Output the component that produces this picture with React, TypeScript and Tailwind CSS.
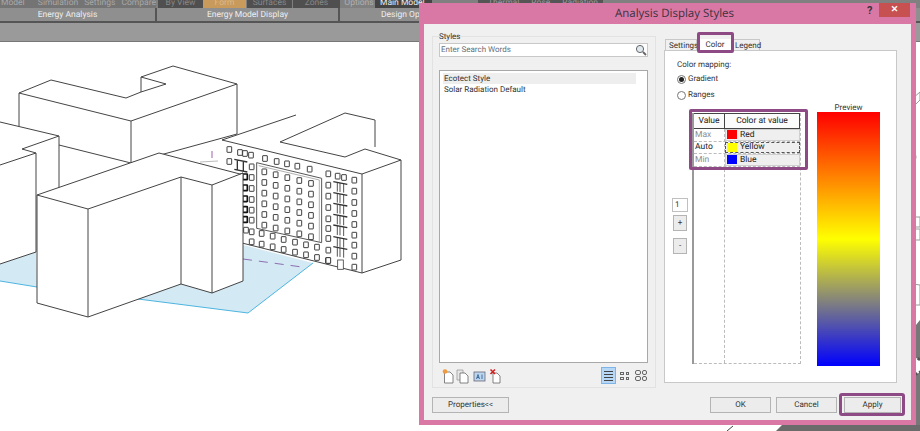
import type { ReactNode } from "react";

// window positions, taken from the facade at 3x
const topRow = [[88, 88], [120, 97], [135, 100], [153, 105], [195, 115], [230, 124], [261, 131], [292, 138], [329, 147], [385, 161], [413, 168], [432, 172], [463, 180], [88, 124], [155, 140]];
const lowRows = [[138, 330], [155, 335], [185, 340], [218, 348], [251, 358], [285, 366], [318, 374], [351, 381], [155, 365], [185, 372], [218, 380], [251, 388], [285, 396], [318, 404], [351, 412], [384, 421]];
const leftCol = [172, 205, 238, 270, 300];
const colA = [195, 228, 262, 296, 325, 355, 390, 421];
const colB = [213, 247, 280, 313, 345, 375, 408, 441];
const balconies = [185, 218, 250, 283, 315, 350, 380];
const panelX = [193, 227, 262, 298, 333];

function Win({ x, y, dark }: { x: number; y: number; dark?: boolean }) {
  return <rect x={x - 7} y={y - 8} width={14} height={17} rx={1} fill="#fff" stroke={dark ? "#111" : "#333"} strokeWidth={dark ? 5 : 2.8} />;
}

function Model() {
  const line = { stroke: "#444", strokeWidth: 1, strokeLinejoin: "round" as const, fill: "#fff" };
  return (
    <svg viewBox="0 42 920 389" className="block w-[920px] h-[389px]">
      <polygon points="0,264 36,252 37,287 0,281" fill="#d3e9f4" />
      <polyline points="0,281 37,287" stroke="#4db5e0" fill="none" />
      <polygon points="100,280 243,245 313,263 248,313 138,299" fill="#d3e9f4" />
      <polyline points="313,263 248,313 138,299" stroke="#4db5e0" fill="none" />
      <path d="M243 259 L302 267" stroke="#8d6fb0" strokeDasharray="9 7" fill="none" />

      {/* back block */}
      <polygon points="19,93 51,80 126,98 141,92 141,77 173,66 237,84 237,134 131,163 19,135" {...line} />
      <path d="M19 93 L131 121 L237 84 M131 121 V163 M141 92 L166 84 L141 77" {...line} fill="none" />
      <path d="M212 151 V158" stroke="#a060b0" fill="none" />
      <path d="M200 162 L218 161" stroke="#bbb" fill="none" />

      {/* right block */}
      <polygon points="222,140 296,115 345,113 375,120 375,147 365,149 401,160 401,260 362,273 222,238" fill="#fff" />
      <path d="M222 140 L296 115 M280 142 L345 113 L375 120 V147 M280 142 L345 157 L365 149 L401 160 V260 L362 273 L222 238 M222 140 L362 174 L401 160 M362 174 V273" {...line} fill="none" />
      <g transform="translate(200 120) scale(0.3333)">
        {topRow.map(([x, y]) => <Win key={`${x}-${y}`} x={x} y={y} />)}
        {lowRows.map(([x, y]) => <Win key={`${x}-${y}`} x={x} y={y} />)}
        {leftCol.map((y) => <Win key={`a${y}`} x={155} y={y} />)}
        {leftCol.map((y) => <Win key={`b${y}`} x={135} y={y - 2} dark />)}
        {colA.map((y) => <Win key={`c${y}`} x={385} y={y} />)}
        {colB.map((y) => <Win key={`d${y}`} x={463} y={y} />)}
        <polygon points="170,128 365,175 365,368 170,325" fill="#fff" stroke="#555" strokeWidth={3} />
        <polyline points="176,137 358,180 358,366" fill="none" stroke="#888" strokeWidth={2} />
        {panelX.map((x, c) =>
          [0, 1, 2, 3, 4, 5].map((r) => <Win key={`${c}-${r}`} x={x} y={155 + r * 32 + c * 8.7} />),
        )}
        {balconies.map((y) => (
          <g key={y} stroke="#333" fill="none">
            <path d={`M400 ${y} L442 ${y + 8}`} strokeWidth={4} />
            <path d={`M412 ${y + 3} V${y + 30} M420 ${y + 4} V${y + 31} M431 ${y + 6} V${y + 33}`} strokeWidth={2.5} />
          </g>
        ))}
        <path d="M103 118 L142 126 M103 148 L142 156 M112 120 V150 M130 124 V154" stroke="#333" strokeWidth={4} fill="none" />
        <rect x={413} y={420} width={17} height={28} fill="#fff" stroke="#444" strokeWidth={2.5} />
      </g>

      {/* left block */}
      <polygon points="0,122 59,136 59,190 36,252 0,264" {...line} stroke="none" />
      <path d="M0 122 L59 136 L22 149 L36 153 L0 165 M59 136 V188 M36 153 V252 L0 264" {...line} fill="none" />
      {/* front block */}
      <polygon points="37,195 159,153 240,174 243,173 243,281 212,293 181,284 88,317 37,303" {...line} />
      <path d="M37 195 L88 209 L181 177 L212 185 L243 173 M88 209 V317 M181 177 V284 M212 185 V293" {...line} fill="none" />

      {/* tool icons cut by the dialog */}
      <g fill="#fff" stroke="#9a9a9a">
        <path d="M905 105 L920 92 V100 L910 110 Z" />
        <circle cx="911" cy="157" r="5" />
        <path d="M908 217 H920 V227 H908 Z M908 229 H920 V240 H908 Z" />
        <path d="M920 285 A12 12 0 0 0 908 305 L920 305 Z" />
      </g>
      <polygon points="920,320 916,325 916,345 905,431 920,431" fill="#777" />
      <polygon points="776,431 782,425 920,425 920,431" fill="#6b6b6b" />
      <path d="M727 431 L733 426" stroke="#444" fill="none" />
      <circle cx="915" cy="366" r="8" fill="#fff" stroke="#555" strokeWidth={3} strokeDasharray="3 2" />
    </svg>
  );
}

function Btn({ children, cls = "" }: { children: ReactNode; cls?: string }) {
  return (
    <div className={`h-[16px] flex items-center justify-center border border-[#b4b4b4] bg-[#ececec] text-[8px] leading-none text-[#333] ${cls}`}>
      {children}
    </div>
  );
}

function ColorRow({ name, label, color, dark, active }: { name: string; label: string; color: string; dark?: boolean; active?: boolean }) {
  return (
    <div className="flex h-[12.5px] border-b border-dashed border-[#bbb] text-[8.5px] leading-none">
      <div className={`w-[31px] flex items-center pl-[1px] ${dark ? "text-[#222]" : "text-[#8d8d8d]"}`}>{name}</div>
      <div className={`flex-1 flex items-center gap-[3px] pl-[1px] bg-[#efefef] text-[#222] border ${active ? "border-dashed border-[#555]" : "border-[#cfcfcf]"}`}>
        <span className={`w-[10px] h-[9px] ${color}`}></span>
        {label}
      </div>
    </div>
  );
}

function Radio({ on, label }: { on?: boolean; label: string }) {
  return (
    <div className="flex items-center gap-[2px] h-[16px] text-[8px] text-[#333]">
      <span className="w-[9px] h-[9px] rounded-full border border-[#777] bg-white grid place-items-center">
        {on && <span className="w-[5px] h-[5px] rounded-full bg-[#222]"></span>}
      </span>
      {label}
    </div>
  );
}

function ToolIcons() {
  return (
    <div className="flex items-center mt-[4px] h-[17px] pl-[3px]">
      <svg viewBox="0 0 60 16" className="w-[60px] h-[16px]" fill="#fff" stroke="#666" strokeWidth={0.8}>
        <path d="M2.5 4 H8 L11 7 V15 H2.5 Z" />
        <circle cx="3" cy="3.5" r="2.3" fill="#f09a3e" stroke="none" />
        <path d="M15 2 H21 V12 H15 Z" fill="#e8e8e8" stroke="#999" />
        <path d="M18 5 H23 L26 8 V15 H18 Z" />
        <rect x="32" y="4" width="11" height="9" fill="#bcd6ee" stroke="#667" />
        <path d="M34.5 11 L36 6.5 L37.5 11 M35 9.5 H37 M40 6.5 V11" stroke="#25558f" fill="none" />
        <path d="M51 5 H55 L58 8 V15 H51 Z" />
        <path d="M48.5 1.5 L53 6 M53 1.5 L48.5 6" stroke="#d02020" strokeWidth={1.6} />
      </svg>
      <div className="ml-auto mr-[1px] flex items-center">
        <div className="w-[15px] h-[17px] bg-[#b6d7f5] border border-[#7fb5e6] flex flex-col justify-center gap-[2px] px-[2px]">
          <span className="h-px bg-[#444]"></span>
          <span className="h-px bg-[#444]"></span>
          <span className="h-px bg-[#444]"></span>
          <span className="h-px bg-[#444]"></span>
        </div>
        <div className="ml-[4px] w-[9px] grid grid-cols-2 gap-[2px]">
          <span className="h-[3px] border border-[#666]"></span>
          <span className="h-[3px] border border-[#666]"></span>
          <span className="h-[3px] border border-[#666]"></span>
          <span className="h-[3px] border border-[#666]"></span>
        </div>
        <div className="ml-[6px] w-[12px] grid grid-cols-2 gap-[1px]">
          <span className="h-[5px] rounded-[2px] border border-[#666]"></span>
          <span className="h-[5px] rounded-[2px] border border-[#666]"></span>
          <span className="h-[5px] rounded-[2px] border border-[#666]"></span>
          <span className="h-[5px] rounded-[2px] border border-[#666]"></span>
        </div>
      </div>
    </div>
  );
}

function Dialog() {
  return (
    <div className="absolute left-[419px] top-[3px] w-[497px] h-[422px] bg-[#d978a5] flex flex-col">
      <div className="h-[21px] flex items-center relative">
        <span className="w-full text-center pl-[14px] font-['Open_Sans',sans-serif] text-[11.5px] text-[#3a3340]">Analysis Display Styles</span>
        <span className="absolute left-[448px] top-[1px] text-[11px] font-bold leading-[14px] text-[#3a3340]">?</span>
        <div className="absolute left-[460px] top-0 w-[31px] h-[14px] bg-[#c75050] grid place-items-center text-[9px] leading-none font-bold text-white">✕</div>
      </div>
      <div className="flex-1 mx-[5px] mb-[5px] bg-[#f0f0f0] flex flex-col pl-[8px] pr-[10px] pt-[12px]">
        <div className="flex gap-[8px] h-[352px]">
          <div className="w-[224px] border border-[#e2e2e2] pl-[6px] pr-[7px]">
            <div className="h-[12px] -mt-[6px] text-[8px] leading-[12px] text-[#333]">Styles</div>
            <div className="h-[14px] bg-white border border-[#c8c8c8] flex items-center pl-[1px] text-[8px] text-[#66707a]">
              Enter Search Words
              <svg viewBox="0 0 12 12" className="ml-auto w-[12px] h-[12px]" fill="#dfeaf0" stroke="#666">
                <circle cx="5" cy="5" r="3.6" />
                <path d="M8 8 L11 11" strokeWidth={1.8} fill="none" />
              </svg>
            </div>
            <div className="h-[293px] mt-[13px] bg-white border border-[#a8a8a8] pl-[3px] pt-[2px] text-[8px] text-[#333]">
              <div className="h-[11px] w-[193px] bg-[#eeeeee] leading-[11px] pl-px">Ecotect Style</div>
              <div className="h-[11px] leading-[12px] pl-px">Solar Radiation Default</div>
            </div>
            <ToolIcons />
          </div>

          <div className="w-[233px] flex flex-col pt-[3px]">
            <div className="flex h-[11px] pl-[1px] text-[8px] leading-[11px] text-[#333]">
              <div className="w-[32px] pl-[3px] bg-[#f0f0f0] border border-b-0 border-[#c8c8c8]">Settings</div>
              <div className="relative w-[36px] bg-white text-center">
                Color
                <div className="absolute left-0 -top-[7px] w-[37px] h-[21px] border-[3px] border-[#8d4a85] rounded-[2px]"></div>
              </div>
              <div className="w-[27px] pl-[1px] bg-[#f0f0f0] border border-b-0 border-[#c8c8c8]">Legend</div>
            </div>
            <div className="h-[333px] bg-white border border-[#c8c8c8]">
              <div className="h-[52px] pl-[12px] pt-[8px]">
                <div className="h-[12px] text-[8px] leading-[12px] text-[#333]">Color mapping:</div>
                <div>
                  <Radio on label="Gradient" />
                  <Radio label="Ranges" />
                </div>
              </div>
              <div className="flex pl-[7px]">
                <div className="w-[16px] pt-[95px]">
                  <div className="h-[14px] border border-[#c0c0c0] text-[8px] leading-[12px] pl-[2px] text-[#333]">1</div>
                  <Btn cls="mt-[3px] ml-px w-[14px] h-[15px]">+</Btn>
                  <Btn cls="mt-[7px] ml-px w-[14px] h-[15px]">-</Btn>
                </div>
                <div className="relative ml-[4px] mt-[10px] w-[109px] h-[251px] border-l-2 border-[#999]">
                  <div className="h-full border-r border-b border-dashed border-[#bbb]">
                    <div className="flex h-[16px] border-t border-b border-[#444] text-[8.5px] leading-[14px] text-[#222] text-center bg-[#fbfbfb]">
                      <div className="w-[31px] border-r border-[#444]">Value</div>
                      <div className="flex-1 border-r border-[#444]">Color at value</div>
                    </div>
                    <ColorRow name="Max" label="Red" color="bg-[#ff0000]" />
                    <ColorRow name="Auto" label="Yellow" color="bg-[#ffff00]" dark active />
                    <ColorRow name="Min" label="Blue" color="bg-[#0000ff]" />
                  </div>
                  <div className="absolute left-[30px] top-[16px] h-[234px] border-r border-dashed border-[#bbb]"></div>
                  <div className="absolute -left-[5px] -top-[4px] w-[119px] h-[61px] border-[3px] border-[#8d4a85] rounded-[2px]"></div>
                </div>
                <div className="ml-[16px] w-[63px]">
                  <div className="h-[9px] text-center text-[8px] leading-[9px] text-[#333]">Preview</div>
                  <div className="h-[254px] bg-[linear-gradient(#ff0000,#ffff00_50%,#0000ff)]"></div>
                </div>
              </div>
            </div>
          </div>
        </div>

        <div className="flex mt-[9px]">
          <Btn cls="w-[77px]">Properties&lt;&lt;</Btn>
          <Btn cls="w-[61px] ml-auto border-[#7fb5e6]">OK</Btn>
          <Btn cls="w-[61px] ml-[5px]">Cancel</Btn>
          <div className="relative ml-[7px] w-[57px]">
            <Btn cls="w-[57px]">Apply</Btn>
            <div className="absolute -left-[5px] -top-[4px] w-[66px] h-[23px] border-[3px] border-[#8d4a85] rounded-[3px]"></div>
          </div>
        </div>
      </div>
    </div>
  );
}

function Ribbon() {
  return (
    <div className="h-[42px] bg-[#9a9a9a] border-b border-[#777] text-[8.5px] leading-none">
      <div className="flex h-[8px] overflow-hidden bg-[#808080] text-[#b0b0b0] leading-[6px]">
        <div className="w-[156px] bg-[#747474] text-[#a8a8a8] pl-[1px] flex whitespace-nowrap">
          <span className="w-[40px]">Model</span>
          <span className="[word-spacing:4px]">Simulation Settings Compare</span>
        </div>
        <div className="ml-[2px] w-[45px] bg-[#4f4f4f] text-[#888] text-center">By View</div>
        <div className="w-[43px] bg-[#c89a5c] text-[#dcb98a] text-center">Form</div>
        <div className="ml-px w-[45px] bg-[#4f4f4f] text-[#888] text-center">Surfaces</div>
        <div className="ml-px w-[47px] bg-[#4f4f4f] text-[#888] text-center">Zones</div>
        <div className="ml-[3px] w-[32px] text-center">Options</div>
        <div className="w-[57px] bg-[#444] text-[#eee] pl-[5px] whitespace-nowrap">Main Model</div>
        <div className="ml-[46px] w-[125px] bg-[#555] flex gap-[12px] pl-[10px] text-[#999]">
          <span>Thermal</span>
          <span>Rose</span>
          <span>Radiation</span>
        </div>
      </div>
      <div className="flex h-[15px] bg-[#8f8f8f] border-b-2 border-[#555] text-[#eeeeee] leading-[14px]">
        <div className="w-[157px] pr-[20px] text-center border-r-2 border-[#555]">Energy Analysis</div>
        <div className="w-[183px] text-center border-r-2 border-[#555]">Energy Model Display</div>
        <div className="pl-[41px]">Design Options</div>
      </div>
    </div>
  );
}

export default function App() {
  return (
    <div className="relative w-[920px] h-[431px] overflow-hidden bg-white font-['Roboto',sans-serif] [text-rendering:geometricPrecision]">
      <Ribbon />
      <Model />
      <Dialog />
    </div>
  );
}
